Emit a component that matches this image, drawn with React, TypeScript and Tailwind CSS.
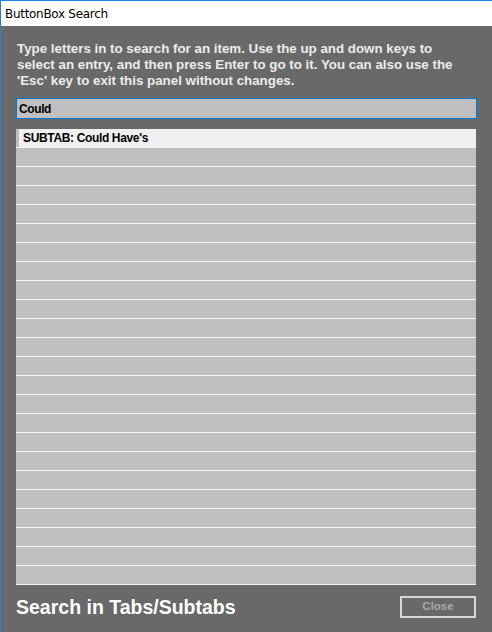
import React from 'react';

const rows = Array.from({ length: 24 }, (_, i) => i);

export default function App() {
  return (
    <div className="w-[492px] h-[632px] flex flex-col border-l border-t border-[#1883d7] bg-[#696969] font-['Liberation_Sans',Arial,sans-serif]">
      <div className="h-[25px] bg-white flex items-center pl-[4px] text-[12px] text-black font-['DejaVu_Sans',sans-serif] tracking-[-0.3px]">
        ButtonBox Search
      </div>
      <div className="flex-1 flex flex-col pl-[15px] pr-[15px]">
        <p className="mt-[15px] pl-[1px] w-[440px] text-[13.33px] leading-[16px] font-bold text-[#ececec]">
          Type letters in to search for an item. Use the up and down keys to select an entry, and then press Enter to go to it. You can also use the 'Esc' key to exit this panel without changes.
        </p>
        <div className="mt-[9px] h-[21px] border border-[#0078d7] bg-[#bfbfbf] flex items-center pl-[2px] text-[12px] tracking-[-0.4px] font-bold text-black">
          Could
        </div>
        <div className="mt-[10px] w-[460px] flex flex-col bg-[#bfbfbf]">
          {rows.map((i) => (
            <div key={i} className="h-[19px] border-b border-[#f4f4f4] flex">
              {i === 0 && (
                <div className="flex-1 flex bg-[#f0f0f0]">
                  <div className="w-[3px] bg-[#bfbfbf]" />
                  <span className="pl-[4px] text-[12px] tracking-[-0.35px] leading-[18px] font-bold text-black">SUBTAB: Could Have's</span>
                </div>
              )}
            </div>
          ))}
        </div>
        <div className="mt-[10px] flex items-center justify-between">
          <span className="text-[19.5px] leading-[24px] font-bold text-white">Search in Tabs/Subtabs</span>
          <button className="w-[76px] h-[22px] mr-[1px] border-2 border-[#d6d6d6] text-[11.5px] font-bold text-[#a8a8a8] flex items-center justify-center">
            Close
          </button>
        </div>
      </div>
    </div>
  );
}
